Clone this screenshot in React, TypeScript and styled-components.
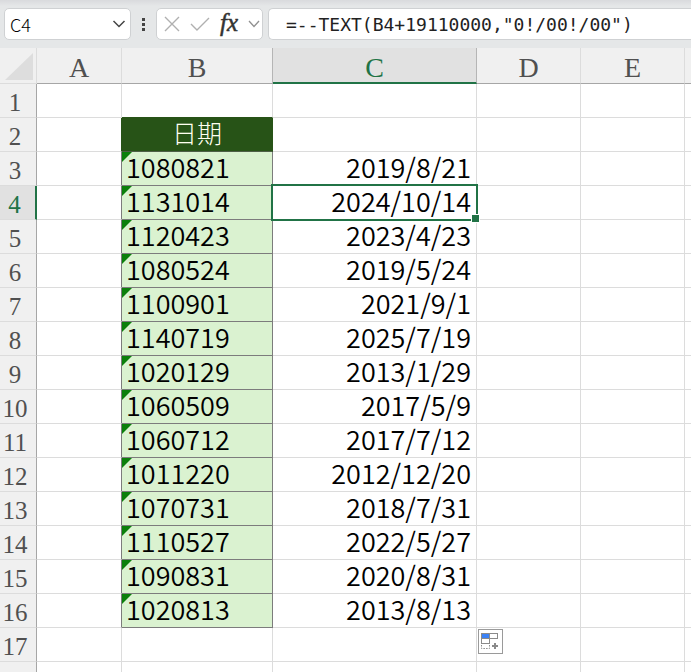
import { useState } from 'react';
import styled, { createGlobalStyle, css } from 'styled-components';

const GRID = '#dcdcdc';
const DARK = '#7c7c7c';
const GREEN = '#217346';
const TITLE = '#275317';

const columns = ['A', 'B', 'C', 'D', 'E', ''];
const widths = [85, 151, 204, 104, 104];

const rows = [
  ['1080821', '2019/8/21'],
  ['1131014', '2024/10/14'],
  ['1120423', '2023/4/23'],
  ['1080524', '2019/5/24'],
  ['1100901', '2021/9/1'],
  ['1140719', '2025/7/19'],
  ['1020129', '2013/1/29'],
  ['1060509', '2017/5/9'],
  ['1060712', '2017/7/12'],
  ['1011220', '2012/12/20'],
  ['1070731', '2018/7/31'],
  ['1110527', '2022/5/27'],
  ['1090831', '2020/8/31'],
  ['1020813', '2013/8/13'],
];

const FIRST = 3;
const LAST = FIRST + rows.length - 1;
const ROW_COUNT = 18;

const App = () => {
  const [name, setName] = useState('C4');
  const [formula, setFormula] = useState('=--TEXT(B4+19110000,"0!/00!/00")');

  return (
    <Page>
      <GlobalStyle />
      <FormulaBar>
        <NameBox>
          <NameInput
            aria-label="名稱方塊"
            value={name}
            onChange={(e) => setName(e.target.value)}
          />
          <IconButton type="button" aria-label="名稱清單">
            <svg width="14" height="8" viewBox="0 0 14 8" fill="none" stroke="#444" strokeWidth="1.5">
              <path d="M1.5 1 L7 6.5 L12.5 1" />
            </svg>
          </IconButton>
        </NameBox>
        <Dots>
          <i />
          <i />
          <i />
        </Dots>
        <Actions>
          <IconButton type="button" aria-label="取消">
            <svg width="16" height="16" viewBox="0 0 16 16" fill="none" stroke="#b0b0b0" strokeWidth="1.4">
              <path d="M1 1 L15 15 M15 1 L1 15" />
            </svg>
          </IconButton>
          <IconButton type="button" aria-label="輸入">
            <svg width="20" height="14" viewBox="0 0 20 14" fill="none" stroke="#b0b0b0" strokeWidth="1.4">
              <path d="M1 7 L7 13 L19 1" />
            </svg>
          </IconButton>
          <FxButton type="button" aria-label="插入函數">
            fx
          </FxButton>
          <IconButton type="button" aria-label="函數清單">
            <svg width="12" height="8" viewBox="0 0 12 8" fill="none" stroke="#909090" strokeWidth="1.3">
              <path d="M1 1 L6 6.5 L11 1" />
            </svg>
          </IconButton>
        </Actions>
        <FormulaInput
          aria-label="資料編輯列"
          value={formula}
          spellCheck={false}
          onChange={(e) => setFormula(e.target.value)}
        />
      </FormulaBar>
      <Sheet>
        <colgroup>
          <col style={{ width: 37 }} />
          {widths.map((w, i) => (
            <col key={i} style={{ width: w }} />
          ))}
          <col />
        </colgroup>
        <thead>
          <tr>
            <Corner>
              <svg width="28" height="27" viewBox="0 0 28 27">
                <path d="M28 0 V27 H0 Z" fill="#dddddd" />
              </svg>
            </Corner>
            {columns.map((c) => (
              <ColHead key={c} scope="col" $active={c === 'C'} $strong={c === 'B'}>
                {c}
              </ColHead>
            ))}
          </tr>
        </thead>
        <tbody>
          {Array.from({ length: ROW_COUNT }, (_, i) => {
            const n = i + 1;
            const data = rows[n - FIRST];
            const inList = n >= FIRST && n <= LAST;
            const side = n === 2 ? TITLE : inList ? DARK : GRID;
            const selected = n === 4;
            return (
              <tr key={n}>
                <RowHead scope="row" $active={selected}>
                  {n}
                </RowHead>
                <Cell $right={side} />
                {n === 2 ? (
                  <TitleCell>日期</TitleCell>
                ) : data ? (
                  <SourceCell>{data[0]}</SourceCell>
                ) : (
                  <Cell $bottom={n === 1 ? TITLE : GRID} />
                )}
                <DateCell>
                  {data && data[1]}
                  {selected && <Selection />}
                </DateCell>
                <Cell>
                  {n === LAST + 1 && (
                    <FillButton type="button" aria-label="自動填滿選項">
                      <svg width="23" height="23" viewBox="0 0 23 23" fill="none" stroke="#8a8a8a">
                        <rect x="2.5" y="3.5" width="16" height="5" fill="#fff" />
                        <rect x="2.5" y="3.5" width="8" height="5" fill="#3b82f6" />
                        <rect x="2.5" y="8.5" width="8" height="5" fill="#fff" />
                        <path d="M2.5 15 V18.5 H10.5 V15" strokeDasharray="1.5 1.2" />
                        <path d="M16 13 V19 M13 16 H19" strokeWidth="2" />
                      </svg>
                    </FillButton>
                  )}
                </Cell>
                <Cell />
                <Cell />
              </tr>
            );
          })}
        </tbody>
      </Sheet>
    </Page>
  );
};

export default App;

const GlobalStyle = createGlobalStyle`
  * {
    box-sizing: border-box;
  }
  body {
    margin: 0;
    background: #fff;
    font-family: 'Noto Sans CJK TC', sans-serif;
  }
`;

const Page = styled.div`
  height: 100vh;
  overflow: hidden;
`;

const FormulaBar = styled.div`
  display: flex;
  align-items: center;
  height: 48px;
  padding-left: 4px;
  background: linear-gradient(#d9dadd, #e5e7e8 6px);
`;

const box = css`
  height: 32px;
  background: #fff;
  border: 1px solid #cfd1d3;
  border-radius: 5px;
`;

const NameBox = styled.div`
  ${box}
  display: flex;
  align-items: center;
  width: 127px;
  padding: 0 4px 0 5px;
`;

const NameInput = styled.input`
  flex: 1;
  min-width: 0;
  padding: 0;
  border: 0;
  outline: 0;
  background: none;
  color: #000;
  font: 300 18px 'Noto Sans CJK TC', sans-serif;
`;

const IconButton = styled.button`
  display: flex;
  padding: 0;
  border: 0;
  background: none;
`;

const Dots = styled.div`
  display: flex;
  flex-direction: column;
  align-items: center;
  gap: 2px;
  width: 25px;
  i {
    width: 3px;
    height: 3px;
    background: #444;
  }
`;

const Actions = styled.div`
  ${box}
  display: flex;
  align-items: center;
  justify-content: space-between;
  width: 107px;
  margin-right: 5px;
  padding: 0 2px 0 7px;
`;

const FxButton = styled.button`
  padding: 0 0 2px;
  border: 0;
  background: none;
  color: #333;
  font: italic 25px/28px 'Liberation Serif', serif;
  -webkit-text-stroke: 0.5px #333;
`;

const FormulaInput = styled.input`
  ${box}
  flex: 1;
  min-width: 0;
  padding: 0 0 0 17px;
  border-right: 0;
  border-radius: 5px 0 0 5px;
  outline: 0;
  color: #222;
  font: 18px 'DejaVu Sans Mono', monospace;
`;

const Sheet = styled.table`
  width: 100%;
  table-layout: fixed;
  border-collapse: separate;
  border-spacing: 0;
  th:last-child,
  td:last-child {
    border-right: 0;
  }
`;

const Corner = styled.td`
  height: 36px;
  padding: 5px 0 0 5px;
  background: #f0f0f0;
  border-right: 1px solid #dcdcdc;
  border-bottom: 1px solid #dcdcdc;
  vertical-align: top;
  svg {
    display: block;
  }
`;

const ColHead = styled.th<{ $active: boolean; $strong: boolean }>`
  height: 36px;
  padding: 5px 0 0;
  color: #505050;
  background: #f0f0f0;
  border-right: 1px solid ${(p) => (p.$strong ? '#b5b5b5' : '#dcdcdc')};
  border-bottom: 1px solid #a6a6a6;
  font: 28px/28px 'Liberation Serif', serif;
  ${(p) =>
    p.$active &&
    css`
      color: ${GREEN};
      background: #e1e1e1;
      border-right-color: #b5b5b5;
      border-bottom: 2px solid ${GREEN};
    `}
`;

const RowHead = styled.th<{ $active: boolean }>`
  height: 34px;
  padding: 4px 6px 0 0;
  color: ${(p) => (p.$active ? GREEN : '#505050')};
  background: ${(p) => (p.$active ? '#e1e1e1' : '#f0f0f0')};
  border-right: ${(p) => (p.$active ? `2px solid ${GREEN}` : '1px solid #a6a6a6')};
  border-bottom: 1px solid ${GRID};
  font: 25px/28px 'Liberation Serif', serif;
`;

const Cell = styled.td<{ $right?: string; $bottom?: string }>`
  position: relative;
  height: 34px;
  padding: 0 0 4px;
  border-right: 1px solid ${(p) => p.$right || GRID};
  border-bottom: 1px solid ${(p) => p.$bottom || GRID};
  font-size: 27px;
  font-weight: 350;
  line-height: 29px;
`;

const TitleCell = styled(Cell)`
  color: #fffff0;
  background: ${TITLE};
  border-right-color: ${TITLE};
  border-bottom-color: #4d5f46;
  font-size: 25px;
  font-weight: 300;
  text-align: center;
`;

// the corner triangle marks a number stored as text
const SourceCell = styled(Cell)`
  padding-left: 4px;
  background: #daf2d0;
  border-color: ${DARK};
  &::before {
    content: '';
    position: absolute;
    top: 0;
    left: 0;
    width: 10px;
    height: 10px;
    background: #0b800b;
    clip-path: polygon(0 0, 100% 0, 0 100%);
  }
`;

const DateCell = styled(Cell)`
  padding-right: 5px;
  text-align: right;
`;

const Selection = styled.div`
  position: absolute;
  z-index: 1;
  inset: -2px;
  border: 2px solid ${GREEN};
  &::after {
    content: '';
    position: absolute;
    right: -4px;
    bottom: -4px;
    width: 7px;
    height: 7px;
    background: ${GREEN};
    border: 1px solid #fff;
  }
`;

const FillButton = styled.button`
  position: absolute;
  z-index: 1;
  top: 1px;
  left: 1px;
  display: flex;
  padding: 0;
  background: #fff;
  border: 1px solid #9a9a9a;
`;
